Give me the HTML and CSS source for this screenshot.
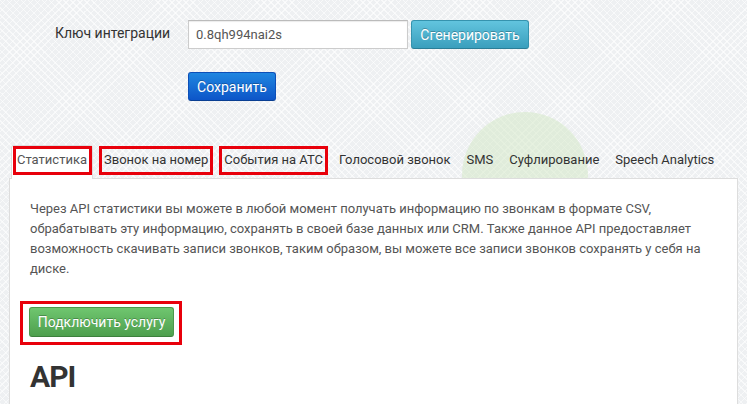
FILE: index.html
```html
<!DOCTYPE html>
<html lang="ru">
<head>
<meta charset="utf-8">
<title>API</title>
<link rel="stylesheet" href="styles.css">
</head>
<body>
<div class="page">
  <div class="decor-circle"></div>
  <form class="settings">
    <div class="field-row">
      <label class="field-label">Ключ интеграции</label>
      <input class="field-input" type="text" value="0.8qh994nai2s">
      <button class="btn btn-info" type="button">Сгенерировать</button>
    </div>
    <div class="actions">
      <button class="btn btn-primary" type="button">Сохранить</button>
    </div>
  </form>

  <div class="tabs-wrap">
    <ul class="tabs">
      <li class="tab active"><span class="tab-label marked">Статистика</span></li>
      <li class="tab"><span class="tab-label marked">Звонок на номер</span></li>
      <li class="tab"><span class="tab-label marked">События на АТС</span></li>
      <li class="tab"><span class="tab-label">Голосовой звонок</span></li>
      <li class="tab"><span class="tab-label">SMS</span></li>
      <li class="tab"><span class="tab-label">Суфлирование</span></li>
      <li class="tab"><span class="tab-label">Speech Analytics</span></li>
    </ul>
    <div class="panel">
      <p class="panel-text">Через API статистики вы можете в любой момент получать информацию по звонкам в формате CSV, обрабатывать эту информацию, сохранять в своей базе данных или CRM. Также данное API предоставляет возможность скачивать записи звонков, таким образом, вы можете все записи звонков сохранять у себя на диске.</p>
      <div class="cta-mark">
        <button class="btn btn-success" type="button">Подключить услугу</button>
      </div>
      <h2 class="panel-title">API</h2>
    </div>
  </div>
</div>
</body>
</html>
```

FILE: styles.css
```css
html, body {
  margin: 0;
  padding: 0;
  height: 100%;
  overflow: hidden;
}

body {
  font-family: Roboto, "Noto Sans", sans-serif;
  font-size: 13px;
  color: #333;
  background-color: #eef0f2;
  background-image:
    repeating-linear-gradient(45deg, rgba(255,255,255,0.6) 0 1px, transparent 1px 5px),
    repeating-linear-gradient(-45deg, rgba(255,255,255,0.6) 0 1px, transparent 1px 5px);
}

.page {
  position: relative;
  min-height: 100%;
}

.decor-circle {
  position: absolute;
  left: 462px;
  top: 112px;
  width: 126px;
  height: 126px;
  border-radius: 50%;
  background: rgba(214, 234, 200, 0.55);
}

.settings {
  position: relative;
  margin: 0;
  padding: 20px 0 0 55px;
}

.field-row {
  display: flex;
  align-items: center;
  height: 29px;
}

.field-label {
  width: 133px;
  font-size: 14px;
  color: #333;
  margin-top: -4px;
}

.field-input {
  box-sizing: border-box;
  width: 220px;
  height: 29px;
  margin: 0 3px 0 0;
  padding: 0 7px;
  border: 1px solid #ccc;
  border-top-color: #bbb;
  border-radius: 0;
  background: #fff;
  box-shadow: inset 0 1px 1px rgba(0,0,0,0.08);
  font-family: inherit;
  font-size: 13px;
  color: #555;
}

.actions {
  padding: 23px 0 0 133px;
}

.btn {
  box-sizing: border-box;
  height: 29px;
  padding: 0;
  border: 1px solid;
  border-radius: 3px;
  font-family: inherit;
  font-size: 14px;
  color: #fff;
  white-space: nowrap;
  text-shadow: 0 -1px 0 rgba(0,0,0,0.25);
  cursor: pointer;
}

.btn-info {
  width: 118px;
  background: linear-gradient(#62c4de, #3a9fbd);
  border-color: #3593ae #3593ae #2b7e97;
}

.btn-primary {
  width: 88px;
  background: linear-gradient(#1f86e0, #0d55c8);
  border-color: #0c4fb8 #0c4fb8 #093e92;
}

.btn-success {
  width: 145px;
  height: 30px;
  background: linear-gradient(#6fc66f, #4e9f4e);
  border-color: #4b984b #4b984b #3d803d;
}

.tabs-wrap {
  position: relative;
  margin-top: 44px;
}

.tabs {
  display: flex;
  list-style: none;
  margin: 0 0 -1px 0;
  padding: 0 0 0 11px;
}

.tab {
  box-sizing: border-box;
  height: 34px;
  margin-right: 3px;
  padding: 0 0 0 1px;
  border: 1px solid transparent;
  border-bottom: 0;
  display: flex;
  align-items: flex-start;
}

.tab.active {
  background: #fff;
  border-color: #ddd;
  border-radius: 3px 3px 0 0;
  position: relative;
  z-index: 1;
  margin-right: 4px;
}

.tab-label {
  display: block;
  padding: 3px 2px 4px;
  line-height: 16px;
  border: 3px solid transparent;
  white-space: nowrap;
  color: #333;
}

.tab.active .tab-label {
  color: #555;
  padding-left: 1px;
  padding-right: 2px;
}

.tab-label.marked {
  border-color: #e8000b;
}

.panel {
  margin: 0 9px 0 9px;
  min-height: 240px;
  padding: 20px 20px 0 20px;
  background: #fff;
  border: 1px solid #ddd;
  border-bottom: 0;
}

.panel-text {
  margin: 0;
  line-height: 20px;
  color: #555;
}

.cta-mark {
  display: inline-block;
  margin: 22px 0 0 -10px;
  padding: 3px 5px 5px 6px;
  border: 3px solid #e8000b;
}

.cta-mark .btn {
  display: block;
}

.panel-title {
  margin: 14px 0 0 0;
  font-size: 30px;
  font-weight: 700;
  letter-spacing: -1px;
  line-height: 36px;
  color: #333;
}
```
